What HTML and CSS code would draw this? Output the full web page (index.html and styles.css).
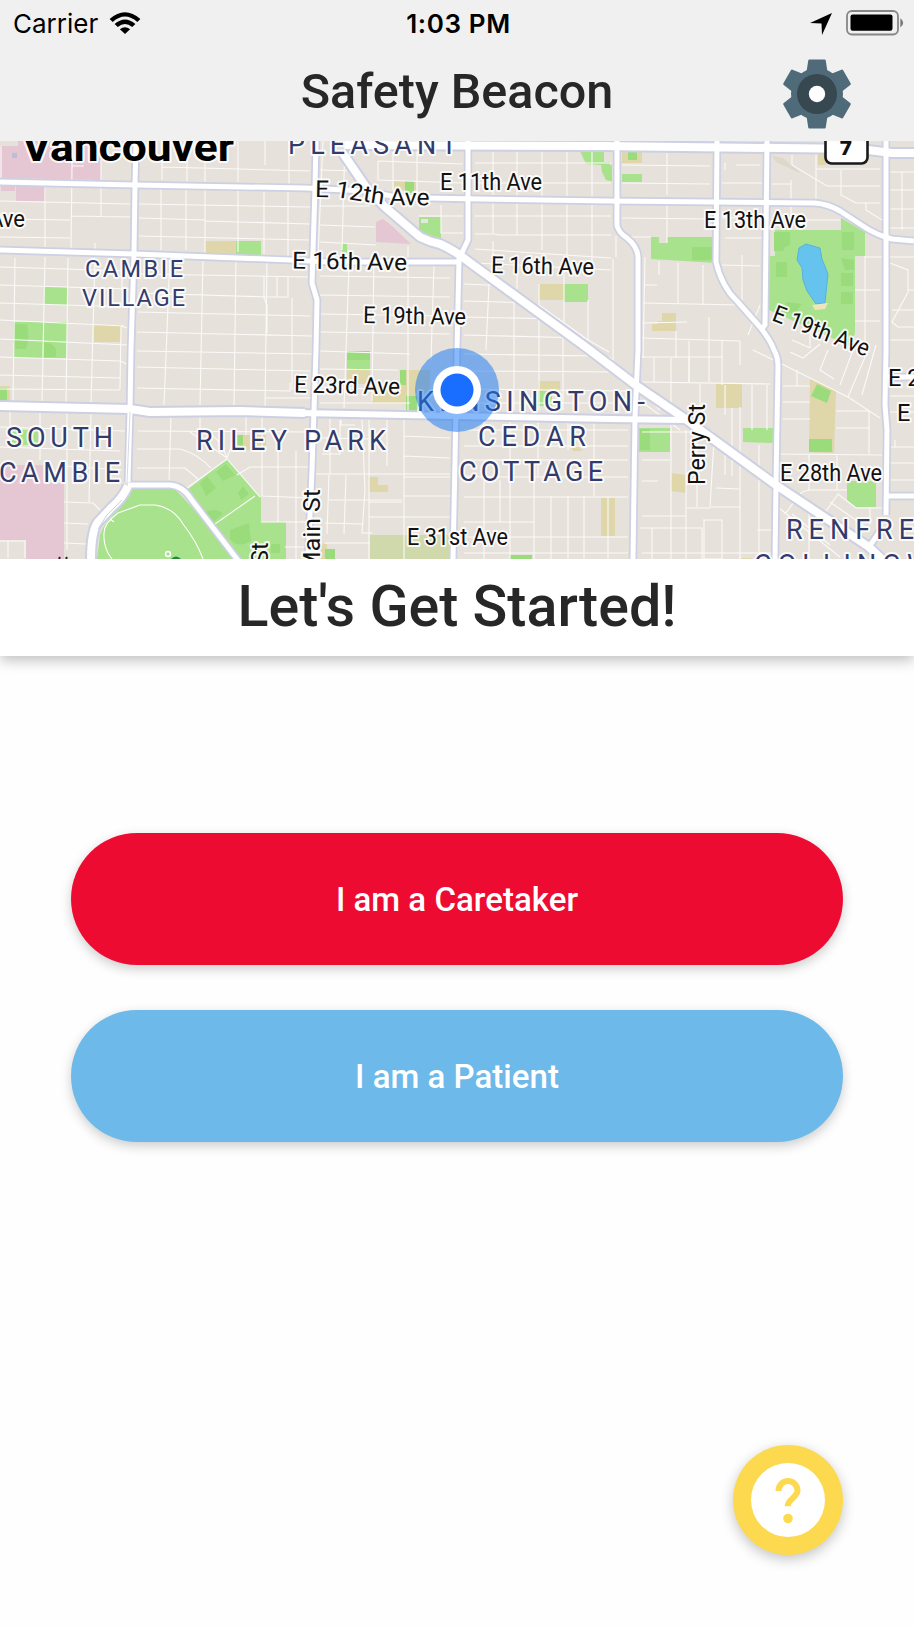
FILE: index.html
```html
<!DOCTYPE html>
<html lang="en">
<head>
<meta charset="utf-8">
<title>Safety Beacon</title>
<link rel="stylesheet" href="styles.css">
</head>
<body>
<div class="app">
  <header class="header">
    <div class="status">
      <div class="status-left">
        <span class="carrier">Carrier</span>
        <svg class="wifi" viewBox="0 0 32 22" width="32" height="22">
          <path d="M0.6 6.9Q16 -6.6 31.4 6.9L28.3 10Q16 -1 3.7 10Z"/>
          <path d="M5.6 12Q16 3 26.4 12L23.2 15Q16 9 8.8 15Z"/>
          <path d="M10.9 17.2Q16 13.2 21.1 17.2L16 22Z"/>
        </svg>
      </div>
      <span class="time">1:03 PM</span>
      <div class="status-right">
        <svg class="arrow" viewBox="0 0 22 22" width="22" height="22"><path d="M22 0L12 22L11.5 10.6L0 10Z"/></svg>
        <svg class="battery" viewBox="0 0 58 26" width="58" height="26">
          <rect x="1" y="1" width="51" height="23.5" rx="5" fill="none" stroke="#868686" stroke-width="1.8"/>
          <rect x="4.5" y="4.4" width="42" height="16.3" rx="2.2"/>
          <path d="M54.3 8.2Q57.2 10 57.2 12.8T54.3 17.4Z" fill="#777"/>
        </svg>
      </div>
    </div>
    <div class="nav">
      <h1 class="title">Safety Beacon</h1>
      <svg class="gear" viewBox="-35 -35 70 70" width="70" height="70">
        <g fill="#4f6b79">
          <circle r="26"/>
          <path id="tooth" d="M-10.5 -22L-8.8 -33.3Q-8.7 -34.5 -7.5 -34.5H7.5Q8.7 -34.5 8.8 -33.3L10.5 -22Z"/>
          <use href="#tooth" transform="rotate(60)"/><use href="#tooth" transform="rotate(120)"/>
          <use href="#tooth" transform="rotate(180)"/><use href="#tooth" transform="rotate(240)"/>
          <use href="#tooth" transform="rotate(300)"/>
        </g>
        <circle r="20" fill="#374850"/><circle r="8.2" fill="#fff"/>
      </svg>
    </div>
  </header>

  <svg class="map" viewBox="0 141 914 418" width="914" height="418">
    <defs>
      <path id="curve12" d="M315 197L338 197.5L386 205L432 205.5"/>
      <g id="roads">
        <path d="M0 182L135 185L305 188L365 191L400 197.5L480 199L610 201L815 203Q828 204 840 211L863 226Q876 235 892 239L914 241"/>
        <path d="M0 250L135 254L290 260L330 262H458"/>
        <path d="M136 141L135 185L134 254L131 350L130 410L128 482"/>
        <path d="M128 485H170Q183 486 191 499L240 563"/>
        <path d="M316 141L315 188L312 283L317 300L316 350L314 410L312 470L308 560"/>
        <path d="M468 141V240L459 259L457 350L456 410L453 560"/>
        <path d="M617 141V225Q618 232 627 238Q638 247 638 258V350L635 417L633 560"/>
        <path d="M717 141L716 262Q722 287 737 301L760 327Q771 341 774 350Q778 357 778 366L776 483L775 560"/>
        <path d="M767 141L765 325L761 330"/>
        <path d="M886 141V350L885 405L887 430L886 515"/>
        <path d="M886 496H914M886 377H914M869 547L880 531"/>
      </g>
      <g id="wide">
        <path d="M345 145L600 146L860 149L892 153H914"/>
        <path d="M342 152L368 190L385 207L420 237Q430 242 440 244Q454 250 469 262L587 348L637 386L684 418L776 485L869 547L886 563"/>
        <path d="M0 406L130 409L150 412L240 411L305 413"/>
        <path d="M128 486Q122 499 112 507L98 522Q91 531 91 560"/>
      </g>
      <path id="roadKE" d="M300 413L455 416L610 419L684 420"/>
    </defs>
    <rect class="land" x="0" y="141" width="914" height="418"/>
    <g class="pink">
      <path d="M0 146H18V141H101V180L0 178Z M1 185H15V191H1Z M16 186H46V201H16Z M376 222L383 219L391 225L411 244L376 242Z M0 465H43V483H64V559H26V540H0Z"/>
    </g>
    <rect x="12" y="153" width="5" height="5" fill="#b9bfd8"/>
    <g class="sand">
      <path d="M205 241h31v13h-31zM94 325h27v17h-27zM394 181h22v9h-22zM539 284h26v16h-26zM622 152h20v11h-20zM818 153h8v12h-8zM662 313h14v18h-24v-7h6v-3h4zM0 386h10v15h-10zM242 435h8v15h-8zM256 435h10v11h-10zM347 369h23v15h-23zM372 385h34v-15h24v33h-58zM369 477h9v8h10v7h-19zM538 381h22v12h-22zM601 498h14v38h-14zM571 447l4-4 8 8h-10zM716 384h26v24h-26zM671 473l15 2v18l-15-2zM810 379L836 390L834 453L809 452ZM321 544h6v15h-6zM742 558h10v2h-10z"/>
    </g>
    <path d="M370 535H452V559H370Z" fill="#cfd9ac"/>
    <path d="M772 156L783 158L802 174L776 162Z" fill="#dcd9cb"/>
    <g class="green">
      <path d="M236 241h25v14h-25zM44 287h24v18h-24zM13 322h54v36h-54zM419 217h22v22h-9l-13-8zM342 243h5v10h-5zM564 284h24v18h-24zM580 151h24v11h6v19l-4-1-4-8-1-7-15-1zM609 165h3v16h-3zM622 174h20v8h-20zM651 237h8v6h8v-6h49v26l-65-4zM12 430h26v15h-26zM132 489H175L190 505L237 559H97L100 535Q104 522 120 508ZM227 459L261 498V559H240L187 490ZM261 522h25v37h-25zM347 360h23v9h-23zM639 428h31v24h-31zM743 428h30v15l-30-1zM847 481h29v26h-20l-9-7zM538 391h14v15h-14z"/>
      <path d="M775 230H841V218L865 232V256H855V333L850 346L769 310V256H775Z"/>
    </g>
    <g class="grass">
      <path d="M15 324h12q3 15-1 25h-11zM44 342q10 1 12 8v7h-12zM405 181h9v12h-9zM628 152h9v8h-9zM692 247h20v13h-20zM0 388h7v13h-7zM237 435h6v11h-6zM347 351h23v9h-23zM400 370h6v15h-6zM406 396h14v16h-14zM325 549h10v10h-10zM510 555h22v4h-22zM640 429h10v21h-10zM817 384L831 391L827 403L811 396zM809 439h23v13h-23zM774 232h16v13q-5 0-7 6h-9zM776 262h11v15h-11zM842 232h12v18h-12zM841 258l13 2v10h-9zM841 273h12v13h-12zM841 292h12v12h-12zM786 302l16 2-7 9h-12zM200 483l7-7 9 12-10 8zM216 472l10-8 9 11-12 6zM238 493l5-7 6 8-8 6zM205 512q12-5 18 2l-11 9zM230 530l19-7 2 18q-13 8-21-2zM271 544h9v9h-9z"/>
    </g>
    <path class="lake" d="M799 248L806 244L820 248L822 259L828 274L825 303L816 304L807 291L803 280L802 268L797 260Z"/>
    <path d="M812 305L828 303L825 309L815 310Z" fill="#ece5bd"/>
    <rect x="421" y="219" width="7" height="4" fill="#e2e8de"/>

    <g class="minor">
      <!-- north-west blocks -->
      <path d="M72 141V166L71 248M101 160V217M45 141V150M1 146V178M72 166H84M0 201L130 204M71 216L130 217M0 219L70 220M0 237L70 238M95 243V250M45 186V219V248"/>
      <path d="M162 141V180M187 141V181M205 141V182M238 141V182M265 141V165M289 141V184M162 167L310 171M161 188V250M186 190V250M205 190V253M238 190V252M264 190V254M288 190V256M139 204L310 207M139 218L205 220M205 221L310 224M139 236L310 240"/>
      <path d="M0 267L130 271M0 285L130 289M0 303L130 307M0 320L124 326M0 339L128 345M0 357L120 361L127 364M0 375L120 378M0 389L120 390M15 258L13 402M45 257L42 402M68 258L66 403M95 258L91 404M122 260V290M121 326L120 389M121 326L127 328"/>
      <path d="M139 274L310 277M139 293L268 297M138 312L310 316M137 332L312 336M137 351L312 354M137 367L310 371M137 388L290 391V383M170 256L164 405M203 258L200 405M236 259L234 407M267 260L265 410M264 276V298L267 305V333M288 277V297H264M292 298V390M265 398H310M277 277V297"/>
      <!-- south-west -->
      <path d="M10 410V430M40 412V460M67 413V550M91 413L89 502M0 427L125 431M0 447L120 451M64 466L122 470M64 502L93 503L100 510M64 523L88 524M64 543L86 544M0 541H25V558M8 541V558"/>
      <path d="M138 431L310 432M137 449H180Q198 454 211 468M137 468H185L198 479M171 416L169 480M200 412V440M190 432L227 458M207 432Q222 440 227 458L234 440M237 475L250 467H310M246 417V435M262 417V496L310 498M278 451V522M296 451V559M261 522H310M285 547H310"/>
      <!-- centre -->
      <path d="M323 141L318 255M345 141L342 250M378 161V180M393 152V190M417 150V193M320 170L360 171M320 206L370 206M320 225L375 227M320 242L376 245M378 161L463 164M378 180L463 183M441 205V233H463M419 216H463M349 265L344 408M374 253L372 401M408 246V412M434 264L431 360M320 276L450 278M320 295L450 297M320 314L450 316M320 332L450 334M320 351L410 354M320 369L398 370M320 387L372 389M320 403H410"/>
      <path d="M341 420V425H355M322 438L371 439M322 454H340M330 419V474M340 420V455M362 420L365 490L362 533H372M369 420V559M387 420V466M404 420V559M404 436L450 438M404 456L450 458M316 474H450M329 475L327 534M346 475L344 534M329 500H402M325 523L362 524M404 496H450M369 502H402M369 517H450M325 543H370M404 477H450"/>
      <!-- east centre -->
      <path d="M493 150V233M517 150V235M542 150V250M567 150V255M592 150V270M475 163H611M475 183H611M475 216H611M475 234H495L500 235H611M475 249L611 258M493 241V255M517 262V289M539 284V305L588 340M588 300V340L609 352M564 270V323M475 263L611 270M489 284L486 350M514 289V410M539 305V410M563 323V410M464 284L510 286M464 301L534 303M464 317L560 319M464 335L586 338M464 354L600 356M464 371L628 372M464 389L628 391M464 403H628"/>
      <path d="M464 430H628M464 446H628M464 476L484 477H628M464 497H628M484 480V559M500 480V522M510 420V559M534 476V559M551 496V559M568 496V559M584 496V559M464 522H534M464 537H628M464 553H628M484 420V445M538 421V476M568 421V450M594 421V496M464 460H628"/>
      <!-- east of Knight -->
      <path d="M667 153V195M622 165L710 166M725 163V170M736 165H760M622 183L710 184M722 183H762M667 205V243M622 218L710 219M722 218H762M725 238H762M622 237H651M616 236V257M613 259V375M645 257L643 358M659 261V275M678 263V303M703 265V305M722 265L760 266M742 255V300M643 303L740 305M644 285H657M642 323L687 322M642 338L740 341M676 331V358M689 341V382M709 317V382M722 341V385M740 341V365M760 305L748 335"/>
      <path d="M792 155V165L827 186H880M791 180V225M816 153V202M816 169H880M841 170V195L856 203H880M772 184H791M866 203V210L882 220M772 220H840M865 257H882M855 290H880M855 321H880M865 256V350M890 172H914M890 190H914M890 209H914M890 228H914M890 257H914M890 263L908 270V292L892 322L898 327H914M902 172V230M908 290H914M892 310H914M886 340H914"/>
      <path d="M609 357L660 410M642 382L770 384M642 357H723M654 358V382M671 358V420M689 357V382M700 384V440M725 385V415M752 385V430M767 385V430M642 402L680 430M642 432H714M714 440L710 507M732 408V476M697 440V507M686 430V559M671 420V559M642 460H670M642 481H658M642 516H686M640 528H702V559M710 507H740M716 488L740 489M740 407V559M652 528V559M687 508H710M704 519V559H722V520H704M759 445V559M757 530H775M740 553H775M642 553H740M608 497V559M725 455V475"/>
      <path d="M753 350L792 369L848 397L880 418M792 340L810 348V325M820 344L803 358L790 352M828 350L820 370L834 379M856 342L840 385M868 350L848 397M876 345L862 395M783 386H810M783 402H810M783 419H810M778 454L882 455M836 411H869V454M836 428H869M797 370V386M809 455V490M837 455V490M785 514L800 494Q804 490 812 490H847M822 517L838 494L856 508H882M830 502L870 530M792 514L830 545M779 508L840 557M809 509V559M870 508V525M890 396H914M890 412H914M890 447H914M890 463H914M890 480H914M895 440V447"/>
      <path class="track" d="M104 533Q104 523 118 513L140 505H155Q174 508 183 524Q197 542 203 559M104 533Q103 548 112 559M110 519L114 522"/>
      <path d="M215 524L255 496M227 459L187 488M227 459L260 497"/>
    </g>

    <use href="#roads" class="casing"/><use href="#roadKE" class="casing ke-case"/><use href="#wide" class="casing wide-case"/>
    <use href="#roads" class="road"/><use href="#roadKE" class="road ke"/><use href="#wide" class="road wide"/>
    <path d="M122 500L107 515L98 529" fill="none" stroke="#ccd0e2"/>
    <path d="M130 412L127 482" fill="none" stroke="#d7d9e6"/>
    <circle cx="168" cy="554" r="2.5" fill="none" stroke="#fff" stroke-width="1.5"/>
    <path d="M171 559Q176 554 181 559" fill="#23863b"/>

    <g class="label">
      <text class="city" x="22" y="161" textLength="212" lengthAdjust="spacingAndGlyphs">Vancouver</text>
      <g class="area">
        <text x="288" y="154" textLength="169">PLEASANT</text>
        <text x="196" y="449.5" textLength="190">RILEY PARK</text>
        <text x="6" y="447" textLength="107">SOUTH</text>
        <text x="-1" y="482" textLength="121">CAMBIE</text>
        <text x="417" y="411" textLength="228">KENSINGTON-</text>
        <text x="478" y="446" textLength="108">CEDAR</text>
        <text x="459" y="481" textLength="144">COTTAGE</text>
        <text x="786" y="539" textLength="158">RENFREW</text>
        <text x="754" y="574" textLength="250">COLLINGWOOD</text>
      </g>
      <g class="area small">
        <text x="85" y="276.500" textLength="98">CAMBIE</text>
        <text x="82" y="305.500" textLength="103">VILLAGE</text>
      </g>
      <g class="street">
        <text textLength="115" lengthAdjust="spacingAndGlyphs"><textPath href="#curve12">E 12th Ave</textPath></text>
        <text x="440" y="189.500" textLength="102" lengthAdjust="spacingAndGlyphs">E 11th Ave</text>
        <text x="704" y="227.500" textLength="102" lengthAdjust="spacingAndGlyphs">E 13th Ave</text>
        <text x="-11" y="226.500" textLength="36" lengthAdjust="spacingAndGlyphs">Ave</text>
        <text x="292" y="268.500" textLength="115" lengthAdjust="spacingAndGlyphs" transform="rotate(1 292 268)">E 16th Ave</text>
        <text x="491" y="273" textLength="103" lengthAdjust="spacingAndGlyphs" transform="rotate(1 490 273)">E 16th Ave</text>
        <text x="363" y="323" textLength="103" lengthAdjust="spacingAndGlyphs" transform="rotate(1 362 322)">E 19th Ave</text>
        <text x="294" y="392.500" textLength="106" lengthAdjust="spacingAndGlyphs" transform="rotate(1 294 392)">E 23rd Ave</text>
        <text x="407" y="544.500" textLength="101" lengthAdjust="spacingAndGlyphs">E 31st Ave</text>
        <text x="780" y="480.500" textLength="102" lengthAdjust="spacingAndGlyphs">E 28th Ave</text>
        <text x="771" y="320.500" textLength="102" lengthAdjust="spacingAndGlyphs" transform="rotate(21 772 320)">E 19th Ave</text>
        <text x="888" y="386">E 2</text>
        <text x="897" y="421">E</text>
        <text transform="translate(320 573) rotate(-90)" textLength="84" lengthAdjust="spacingAndGlyphs">Main St</text>
        <text transform="translate(268 564) rotate(-90)">St</text>
        <text transform="translate(705 485) rotate(-90)" textLength="81" lengthAdjust="spacingAndGlyphs">Perry St</text>
      </g>
    </g>
    <rect x="825.500" y="120" width="42" height="43.500" rx="6" fill="#fff" stroke="#1a1a1a" stroke-width="2.600"/>
    <text class="shield" x="846" y="154.500">7</text>
    <path d="M59 559l1-2M66 559l1-2" stroke="#222" stroke-width="2"/>

    <circle cx="457" cy="390" r="42" fill="#1a78f5" fill-opacity=".52"/>
    <circle cx="457" cy="390" r="24" fill="#fff"/>
    <circle cx="457" cy="390" r="16.500" fill="#196dff"/>
  </svg>

  <section class="banner"><h2 class="banner-text">Let's Get Started!</h2></section>

  <main class="actions">
    <button class="btn caretaker">I am a Caretaker</button>
    <button class="btn patient">I am a Patient</button>
  </main>

  <footer class="footer">
    <button class="help" aria-label="Help">
      <svg viewBox="0 0 74 74" width="74" height="74">
        <circle cx="37" cy="37" r="37" fill="#fff"/>
        <path d="M27.500 28V27.600A9.500 9.500 0 0 1 46.500 27.600C46.500 34.500 36.700 36 36.700 43.200" fill="none" stroke="#fdd94f" stroke-width="6"/>
        <circle cx="37" cy="55.500" r="4.800" fill="#fdd94f"/>
      </svg>
    </button>
  </footer>
</div>
</body>
</html>
```
FILE: styles.css
```css
* { box-sizing: border-box; }
body { margin: 0; background: #fefefe; font-family: Roboto, sans-serif; }
.app { width: 914px; height: 1626px; display: flex; flex-direction: column; overflow: hidden; }

.header { height: 141px; flex: none; background: #f0f0f0; }
.status {
  height: 46px; padding: 0 10px 0 13px;
  display: grid; grid-template-columns: 1fr auto 1fr; align-items: center;
  font-family: Inter, sans-serif; font-size: 26px; line-height: 46px; color: #000;
}
.status-left, .status-right { display: flex; align-items: center; }
.status-left { gap: 11px; }
.status-right { justify-content: flex-end; gap: 14px; }
.carrier { padding-top: 1px; letter-spacing: 0; }
.wifi { margin-top: -2px; }
.time { padding-top: 1px; font-weight: 600; letter-spacing: 0.6px; }
.battery { margin-top: -1px; }
.nav { height: 95px; display: grid; grid-template-columns: 1fr auto 1fr; align-items: center; }
.title {
  grid-column: 2; margin: 0; padding-bottom: 3px;
  font-size: 48.5px; line-height: 56px; font-weight: 500; color: #272727;
}
.gear { justify-self: end; margin-right: 62px; }

.map { display: block; flex: none; }
.land { fill: #e6e1db; }
.pink { fill: #e5c7d3; }
.sand { fill: #dfd7a9; }
.green { fill: #a8e28d; }
.grass { fill: #9adc7b; }
.lake { fill: #66c3ee; stroke: #4eaae0; stroke-width: 0.8; }
.minor { fill: none; stroke: #fbfaf8; stroke-width: 1.1; }
.track { stroke: #fff; }
.casing { fill: none; stroke: #ccd0e2; stroke-width: 8.4; stroke-linejoin: round; }
.ke-case { stroke-width: 10; }
.wide-case { stroke-width: 12; }
.road { fill: none; stroke: #fff; stroke-width: 5; stroke-linejoin: round; }
.ke { stroke-width: 6; }
.wide { stroke-width: 8; }
.label { paint-order: stroke; stroke: #fff; stroke-opacity: 0.85; stroke-width: 4px; stroke-linejoin: round; }
.label text { paint-order: stroke; }
.city { font-size: 40px; font-weight: 700; fill: #000; }
.area { font-size: 27px; fill: #323b6c; }
.small { font-size: 23.5px; }
.street { font-size: 23.5px; fill: #111; }
.shield { font-family: "DejaVu Sans", sans-serif; font-size: 20px; font-weight: 700; text-anchor: middle; fill: #111; }

.banner {
  height: 97px; flex: none; display: flex; justify-content: center;
  background: #fff; box-shadow: 0 4px 13px rgba(0, 0, 0, 0.26); clip-path: inset(0 0 -40px 0);
}
.banner-text { margin: 0; padding-top: 15px; font-size: 57.4px; line-height: 66px; font-weight: 500; color: #272727; }

.actions { flex: 1; padding: 177px 71px 0; display: flex; flex-direction: column; gap: 45px; }
.btn {
  height: 132px; flex: none; border: 0; padding: 2px 0 0; border-radius: 66px; color: #fff;
  font: 500 33.1px/40px Roboto, sans-serif; box-shadow: 0 4px 12px rgba(0, 0, 0, 0.2);
}
.caretaker { background: #ed0b32; }
.patient { background: #6db9e9; }

.footer { display: flex; justify-content: flex-end; padding: 0 71px 71px; }
.help {
  width: 110px; height: 110px; padding: 0; border: 0; border-radius: 50%;
  display: flex; align-items: center; justify-content: center;
  background: #fdd94f; box-shadow: 0 4px 13px rgba(0, 0, 0, 0.23);
}
```
